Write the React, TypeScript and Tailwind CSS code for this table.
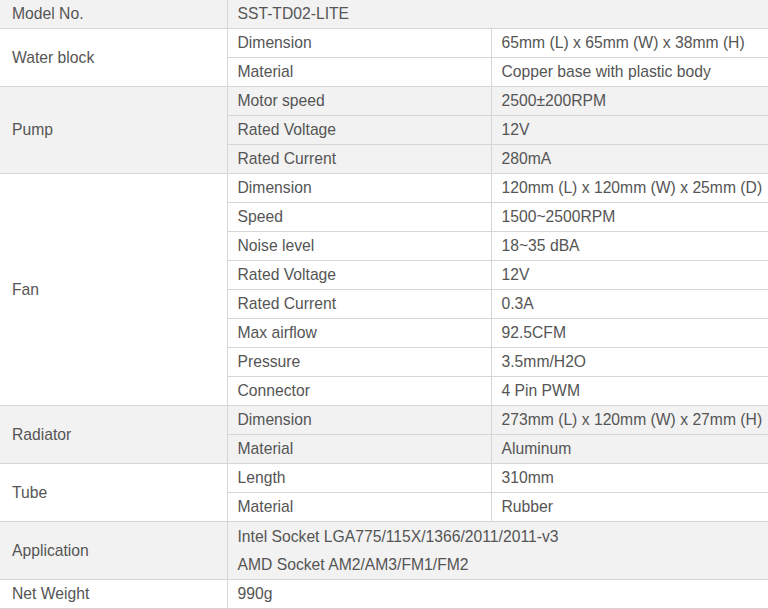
import React from "react";

type Group = {
  label: string;
  rows: [string, string][];
  gray: boolean;
};

const groups: Group[] = [
  {
    label: "Water block",
    gray: false,
    rows: [
      ["Dimension", "65mm (L) x 65mm (W) x 38mm (H)"],
      ["Material", "Copper base with plastic body"],
    ],
  },
  {
    label: "Pump",
    gray: true,
    rows: [
      ["Motor speed", "2500±200RPM"],
      ["Rated Voltage", "12V"],
      ["Rated Current", "280mA"],
    ],
  },
  {
    label: "Fan",
    gray: false,
    rows: [
      ["Dimension", "120mm (L) x 120mm (W) x 25mm (D)"],
      ["Speed", "1500~2500RPM"],
      ["Noise level", "18~35 dBA"],
      ["Rated Voltage", "12V"],
      ["Rated Current", "0.3A"],
      ["Max airflow", "92.5CFM"],
      ["Pressure", "3.5mm/H2O"],
      ["Connector", "4 Pin PWM"],
    ],
  },
  {
    label: "Radiator",
    gray: true,
    rows: [
      ["Dimension", "273mm (L) x 120mm (W) x 27mm (H)"],
      ["Material", "Aluminum"],
    ],
  },
  {
    label: "Tube",
    gray: false,
    rows: [
      ["Length", "310mm"],
      ["Material", "Rubber"],
    ],
  },
];

const td = "border border-[#d6d6d6] pl-[10px] h-[29px] align-middle p-0";
const first = "border border-[#d6d6d6] border-l-0 pl-[12px] h-[29px] align-middle p-0";

export default function App() {
  return (
    <div className="w-[768px] h-[609px] overflow-hidden bg-white">
      <table
        className="w-[768px] border-collapse text-[15.7px] leading-[18px] text-[#555555] -mt-px"
        style={{ fontFamily: '"Liberation Sans", Arial, sans-serif' }}
      >
        <colgroup>
          <col className="w-[227px]" />
          <col className="w-[264px]" />
          <col />
        </colgroup>
        <tbody>
          <tr className="bg-[#f2f2f2]">
            <td className={first}>Model No.</td>
            <td className={`${td} border-r-0`} colSpan={2}>
              SST-TD02-LITE
            </td>
          </tr>
          {groups.map((g) =>
            g.rows.map(([k, v], i) => (
              <tr key={g.label + k + i} className={g.gray ? "bg-[#f2f2f2]" : "bg-white"}>
                {i === 0 && (
                  <td className={first} rowSpan={g.rows.length}>
                    {g.label}
                  </td>
                )}
                <td className={td}>{k}</td>
                <td className={`${td} border-r-0`}>{v}</td>
              </tr>
            ))
          )}
          <tr className="bg-[#f2f2f2]">
            <td className={first}>Application</td>
            <td className={`${td} border-r-0`} colSpan={2}>
              <div className="h-[29px] flex items-center">
                Intel Socket LGA775/115X/1366/2011/2011-v3
              </div>
              <div className="h-[28px] flex items-center">
                AMD Socket AM2/AM3/FM1/FM2
              </div>
            </td>
          </tr>
          <tr className="bg-white">
            <td className={first}>Net Weight</td>
            <td className={`${td} border-r-0`} colSpan={2}>
              990g
            </td>
          </tr>
        </tbody>
      </table>
    </div>
  );
}
